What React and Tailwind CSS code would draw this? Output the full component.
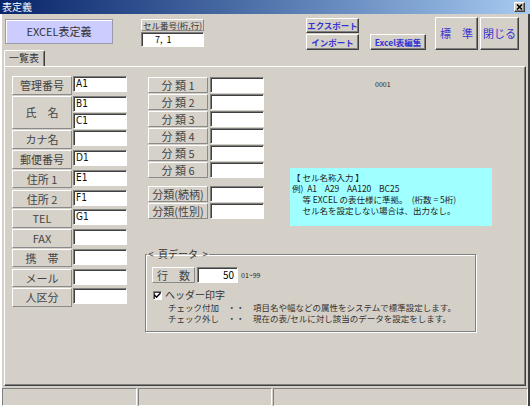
const raised =
  'border border-t-white border-l-white border-r-[#404040] border-b-[#404040] shadow-[inset_-1px_-1px_0_#808080]'
const soft = 'border border-t-white border-l-white border-r-[#8a8a8a] border-b-[#8a8a8a]'
const sunken =
  'border border-t-[#808080] border-l-[#808080] border-r-white border-b-white shadow-[inset_1px_1px_0_#404040]'

const leftRows = [
  ['管理番号', ['A1']],
  ['氏　名', ['B1', 'C1']],
  ['カナ名', ['']],
  ['郵便番号', ['D1']],
  ['住所 1', ['E1']],
  ['住所 2', ['F1']],
  ['TEL', ['G1']],
  ['FAX', ['']],
  ['携　帯', ['']],
  ['メール', ['']],
  ['人区分', ['']],
]

const bunrui = ['分 類 1', '分 類 2', '分 類 3', '分 類 4', '分 類 5', '分 類 6']

function Cell({ value, className = '' }) {
  return (
    <div
      className={`${sunken} bg-white h-[16px] text-[10px] leading-[14px] pl-[2px] font-['Liberation_Sans_Narrow','DejaVu_Sans_Condensed',sans-serif] text-[#111] ${className}`}
    >
      {value}
    </div>
  )
}

function Label({ children, className = '' }) {
  return (
    <div
      className={`${soft} bg-[#d6d2ca] flex items-center justify-center text-[11px] text-[#444] ${className}`}
    >
      {children}
    </div>
  )
}

export default function App() {
  return (
    <div className="w-[530px] h-[406px] bg-[#d4d0c8] flex flex-col overflow-hidden font-['Noto_Sans_CJK_JP',sans-serif] select-none">
      {/* title bar */}
      <div className="h-[14px] shrink-0 bg-gradient-to-r from-[#0a246a] to-[#a6caf0] flex items-center justify-between pl-[2px] pr-[5px]">
        <span className="text-white text-[10px] leading-none">表定義</span>
        <div className={`${raised} bg-[#d4d0c8] w-[11px] h-[10px] flex items-center justify-center`}>
          <svg width="7" height="6" viewBox="0 0 7 6">
            <path d="M1 0.5 L6 5.5 M6 0.5 L1 5.5" stroke="#000" strokeWidth="1.6" />
          </svg>
        </div>
      </div>

      <div className="flex-1 flex flex-col border-l-2 border-l-white border-r-2 border-r-[#404040]">
        {/* toolbar */}
        <div className="h-[36px] shrink-0 flex items-start pl-[3px] pt-[5px]">
          <div className="w-[108px] h-[25px] bg-[#ccccff] border border-[#9a9aa8] shadow-[inset_1px_1px_0_#fff] flex items-center justify-center text-[11px] text-[#333]">
            EXCEL表定義
          </div>
          <div className="ml-[28px] w-[63px] flex flex-col">
            <div className={`${soft} h-[12px] bg-[#d4d0c8] text-[8.5px] leading-[10px] text-center text-[#333]`}>
              セル番号(桁,行)
            </div>
            <div className={`${sunken} mt-px h-[15px] bg-white text-[9px] leading-[13px] pl-[13px] text-black`}>
              7,&nbsp;&nbsp;1
            </div>
          </div>
          <div className="ml-[102px] -mt-px grid grid-cols-[53px_56px] gap-x-[11px] gap-y-px">
            <div className={`${raised} h-[15px] bg-[#d4d0c8] text-[8.5px] font-bold text-[#3434d0] flex items-center justify-center`}>
              エクスポート
            </div>
            <div />
            <div className={`${raised} h-[16px] bg-[#d4d0c8] text-[8.5px] font-bold text-[#3434d0] flex items-center justify-center`}>
              インポート
            </div>
            <div className={`${raised} h-[16px] bg-[#d4d0c8] text-[8.5px] font-bold text-[#3434d0] flex items-center justify-center`}>
              Excel表編集
            </div>
          </div>
          <div className={`${raised} ml-[9px] -mt-[2px] w-[43px] h-[33px] bg-[#d4d0c8] text-[11px] text-[#3434d0] flex items-center justify-center`}>
            標　準
          </div>
          <div className={`${raised} ml-[2px] -mt-[2px] w-[39px] h-[33px] bg-[#d4d0c8] text-[11px] text-[#3434d0] flex items-center justify-center`}>
            閉じる
          </div>
        </div>

        {/* tab */}
        <div className="h-[16px] shrink-0 flex items-end ml-[2px]">
          <div className="w-[41px] h-[16px] border-t border-l border-t-white border-l-white border-r border-r-[#404040] shadow-[inset_-1px_0_0_#808080] rounded-t-[2px] text-[10px] leading-[14px] pl-[4px] text-[#333]">
            一覧表
          </div>
        </div>

        {/* panel */}
        <div className="ml-[2px] w-[522px] h-[320px] shrink-0 border border-t-white border-l-white border-r-[#404040] border-b-[#404040] shadow-[inset_-1px_-1px_0_#808080] flex pl-[7px] pt-[9px]">
          {/* left column */}
          <div className="w-[115px] flex flex-col gap-[1.25px]">
            {leftRows.map(([label, cells]) => (
              <div key={label} className="flex gap-px">
                <Label className="w-[60px]">{label}</Label>
                <div className="w-[54px] flex flex-col gap-[1.25px]">
                  {cells.map((c, i) => (
                    <Cell key={i} value={c} />
                  ))}
                </div>
              </div>
            ))}
          </div>

          {/* right stack */}
          <div className="ml-[18px] flex flex-col">
            <div className="flex items-start">
              <div className="pl-[3px] mt-px flex flex-col">
                <div className="flex flex-col gap-px">
                  {bunrui.map((b) => (
                    <div key={b} className="flex gap-[2px]">
                      <Label className="w-[60px] h-[16px]">{b}</Label>
                      <Cell value="" className="w-[54px]" />
                    </div>
                  ))}
                </div>
                <div className="mt-[8px] flex flex-col gap-px">
                  {['分類(続柄)', '分類(性別)'].map((b) => (
                    <div key={b} className="flex gap-[2px]">
                      <Label className="w-[60px] h-[16px] text-[10px]">{b}</Label>
                      <Cell value="" className="w-[54px]" />
                    </div>
                  ))}
                </div>
              </div>
              <div className="flex flex-col">
                <div className="mt-[3px] ml-[111px] text-[7px] leading-[10px] text-[#222]">0001</div>
                <div className="mt-[79px] ml-[26px] w-[202px] h-[58px] bg-[#a0ffff] pt-[4px] pl-[2px] text-[8.5px] leading-[11px] text-[#222] whitespace-pre">
                  <div>{'【 セル名称入力 】'}</div>
                  <div>{'例)  A1    A29    AA120    BC25'}</div>
                  <div>{'　 等 EXCEL の表仕様に準拠。　(桁数 = 5桁)'}</div>
                  <div>{'　 セル名を設定しない場合は、出力なし。'}</div>
                </div>
              </div>
            </div>

            {/* group box */}
            <fieldset className="mt-[22px] w-[331px] h-[84px] border border-[#808080] shadow-[1px_1px_0_#fff,inset_1px_1px_0_#fff] p-0 m-0 min-w-0">
              <legend className="ml-[1px] px-px text-[10px] leading-[12px] text-[#333] whitespace-pre">{'<  頁データ  >'}</legend>
              <div className="pl-[6px] pt-[7px] flex flex-col">
                <div className="flex items-center">
                  <Label className="w-[43px] h-[16px] text-[11px]">行　数</Label>
                  <div className={`${sunken} ml-[2px] w-[41px] h-[16px] bg-white text-[10px] leading-[14px] text-right pr-[3px] text-black`}>
                    50
                  </div>
                  <span className="ml-[3px] text-[7px] text-[#222]">01~99</span>
                </div>
                <div className="mt-[6px] flex items-center">
                  <div className={`${sunken} ml-px w-[9px] h-[9px] bg-white flex items-center justify-center`}>
                    <svg width="7" height="7" viewBox="0 0 7 7">
                      <path d="M0.5 3 L2.5 5.2 L6.5 1" stroke="#000" strokeWidth="1.4" fill="none" />
                    </svg>
                  </div>
                  <span className="ml-[3px] text-[10px] leading-[12px] text-[#333]">ヘッダー印字</span>
                </div>
                <div className="mt-px pl-[16px] text-[8.5px] leading-[11px] text-[#333] whitespace-pre">
                  <div>チェック付加　・・　項目名や幅などの属性をシステムで標準設定します。</div>
                  <div>チェック外し　・・　現在の表/セルに対し該当のデータを設定をします。</div>
                </div>
              </div>
            </fieldset>
          </div>
        </div>

        {/* status bar */}
        <div className="mt-[2px] h-[18px] flex gap-px">
          <div className="w-[135px] border border-t-[#808080] border-l-[#808080] border-r-white border-b-white" />
          <div className="w-[134px] border border-t-[#808080] border-l-[#808080] border-r-white border-b-white" />
          <div className="flex-1 border border-t-[#808080] border-l-[#808080] border-r-white border-b-white" />
        </div>
      </div>
    </div>
  )
}
